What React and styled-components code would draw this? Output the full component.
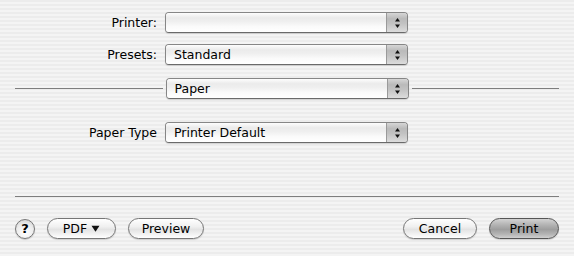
import React from "react";
import styled, { createGlobalStyle } from "styled-components";

const Global = createGlobalStyle`
  html, body { margin: 0; padding: 0; }
  body {
    width: 574px;
    height: 256px;
    overflow: hidden;
    font-family: "DejaVu Sans", "Liberation Sans", sans-serif;
    font-size: 12.5px;
    color: #000;
    background: repeating-linear-gradient(
      to bottom,
      #ececec 0px,
      #ececec 2px,
      #f4f4f4 2px,
      #f4f4f4 4px
    );
  }
`;

const Sheet = styled.div`
  width: 574px;
  height: 256px;
  box-sizing: border-box;
  padding-top: 12px;
  display: flex;
  flex-direction: column;
`;

const Row = styled.div`
  display: flex;
  align-items: center;
  gap: 8px;
  margin-top: ${(p) => p.$space || 0}px;
`;

const Label = styled.div`
  width: 157px;
  text-align: right;
  white-space: nowrap;
`;

const LineRow = styled.div`
  display: flex;
  align-items: center;
  gap: 3px;
  margin: ${(p) => p.$space || 0}px 15px 0 15px;
`;

const Rule = styled.div`
  flex: 1;
  height: 1px;
  background: #7e7e7e;
`;

const PopupBox = styled.div`
  width: 243px;
  height: 21px;
  box-sizing: border-box;
  display: flex;
  border: 1px solid #868686;
  border-bottom-color: #6a6a6a;
  border-radius: 4px;
  overflow: hidden;
  box-shadow: 0 1px 1px rgba(0, 0, 0, 0.14);
`;

const PopupText = styled.div`
  flex: 1;
  display: flex;
  align-items: center;
  padding-left: 8px;
  background: linear-gradient(
    to bottom,
    #fdfdfd 0%,
    #ebebeb 25%,
    #efefef 45%,
    #fafafa 70%,
    #ffffff 100%
  );
  white-space: nowrap;
`;

const PopupArrows = styled.div`
  width: 20px;
  border-left: 1px solid #9a9a9a;
  display: flex;
  align-items: center;
  justify-content: center;
  background: linear-gradient(
    to bottom,
    #d6d6d6 0%,
    #bababa 30%,
    #c2c2c2 55%,
    #dcdcdc 100%
  );
`;

const Arrows = () => (
  <svg width="7" height="12" viewBox="0 0 7 12">
    <path d="M3.5 1 L6 4.5 L1 4.5 Z" fill="#111" />
    <path d="M3.5 11 L6 7.5 L1 7.5 Z" fill="#111" />
  </svg>
);

const Popup = ({ children }) => (
  <PopupBox>
    <PopupText>{children}</PopupText>
    <PopupArrows>
      <Arrows />
    </PopupArrows>
  </PopupBox>
);

const Divider = styled.div`
  height: 1px;
  margin: ${(p) => p.$space || 0}px 15px 0 15px;
  background: #7e7e7e;
`;

const Footer = styled.div`
  display: flex;
  align-items: center;
  margin: 21px 15px 0 15px;
`;

const Group = styled.div`
  display: flex;
  align-items: center;
  gap: 12px;
`;

const Spacer = styled.div`
  flex: 1;
`;

const HelpButton = styled.div`
  width: 20px;
  height: 20px;
  box-sizing: border-box;
  border-radius: 50%;
  border: 1px solid #777;
  background: radial-gradient(circle at 50% 70%, #ffffff 0%, #ececec 55%, #c8c8c8 100%);
  display: flex;
  align-items: center;
  justify-content: center;
  font-weight: bold;
  font-size: 13px;
  box-shadow: 0 1px 1px rgba(0, 0, 0, 0.18);
`;

const Button = styled.div`
  width: ${(p) => p.$w}px;
  height: 21px;
  box-sizing: border-box;
  border-radius: 11px;
  border: 1px solid ${(p) => (p.$default ? "#555" : "#767676")};
  display: flex;
  align-items: center;
  justify-content: center;
  gap: 4px;
  white-space: nowrap;
  box-shadow: 0 1px 1px rgba(0, 0, 0, 0.15);
  background: ${(p) =>
    p.$default
      ? "linear-gradient(to bottom, #d2d2d2 0%, #afafaf 35%, #9e9e9e 55%, #b4b4b4 80%, #d0d0d0 100%)"
      : "linear-gradient(to bottom, #ffffff 0%, #f0f0f0 40%, #e3e3e3 55%, #f2f2f2 80%, #ffffff 100%)"};
`;

const Caret = () => (
  <svg width="9" height="7" viewBox="0 0 9 7">
    <path d="M0.5 0.8 L8.5 0.8 L4.5 6.8 Z" fill="#111" />
  </svg>
);

export default function App() {
  return (
    <>
      <Global />
      <Sheet>
        <Row>
          <Label>Printer:</Label>
          <Popup />
        </Row>
        <Row $space={11}>
          <Label>Presets:</Label>
          <Popup>Standard</Popup>
        </Row>
        <LineRow $space={13}>
          <Rule />
          <Popup>Paper</Popup>
          <Rule />
        </LineRow>
        <Row $space={23}>
          <Label>Paper Type</Label>
          <Popup>Printer Default</Popup>
        </Row>
        <Divider $space={53} />
        <Footer>
          <Group>
            <HelpButton>?</HelpButton>
            <Button $w={69}>
              PDF <Caret />
            </Button>
            <Button $w={76}>Preview</Button>
          </Group>
          <Spacer />
          <Group>
            <Button $w={74}>Cancel</Button>
            <Button $w={70} $default>
              Print
            </Button>
          </Group>
        </Footer>
      </Sheet>
    </>
  );
}
